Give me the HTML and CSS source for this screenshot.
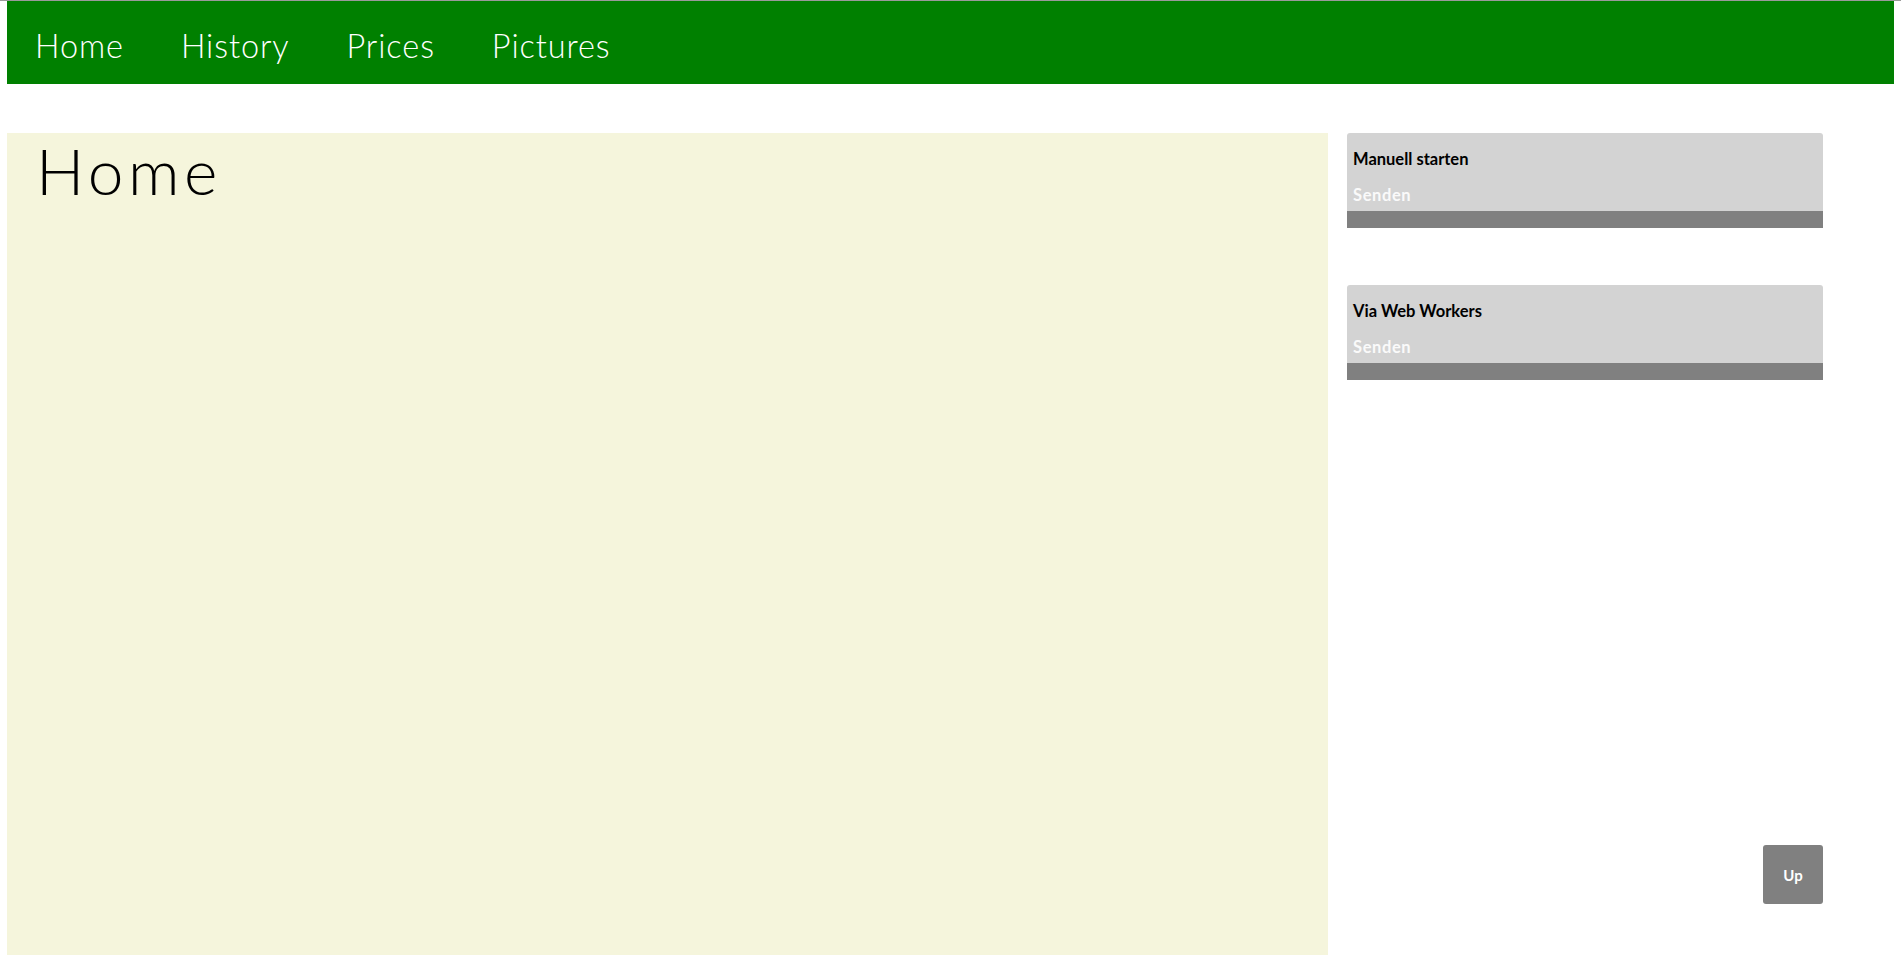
FILE: index.html
```html
<!DOCTYPE html>
<html lang="de">
<head>
<meta charset="utf-8">
<title>Home</title>
<link rel="stylesheet" href="styles.css">
</head>
<body>
<div class="page">
  <nav class="topnav">
    <a class="navlink" href="#">Home</a>
    <a class="navlink" href="#">History</a>
    <a class="navlink" href="#">Prices</a>
    <a class="navlink" href="#">Pictures</a>
  </nav>
  <div class="layout">
    <main class="content">
      <h1 class="title">Home</h1>
    </main>
    <aside class="sidebar">
      <section class="card">
        <div class="card-body">
          <div class="card-title">Manuell starten</div>
          <div class="card-action">Senden</div>
        </div>
        <div class="card-foot"></div>
      </section>
      <section class="card">
        <div class="card-body">
          <div class="card-title">Via Web Workers</div>
          <div class="card-action">Senden</div>
        </div>
        <div class="card-foot"></div>
      </section>
    </aside>
  </div>
</div>
<a class="up-btn" href="#">Up</a>
</body>
</html>
```
FILE: styles.css
```css
html, body {
  margin: 0;
  padding: 0;
  height: 100%;
}
body {
  border-top: 1px solid #9a9a9a;
  box-sizing: border-box;
  background: #fff;
  font-family: "Lato", "Liberation Sans", sans-serif;
  overflow: hidden;
}
.page {
  padding: 0 7px;
  height: 100%;
  display: flex;
  flex-direction: column;
}
.topnav {
  background: #008000;
  height: 83px;
  display: flex;
  align-items: center;
  padding-left: 28px;
  gap: 57px;
  flex-shrink: 0;
}
.navlink {
  color: #fff;
  text-decoration: none;
  font-family: "Lato", sans-serif;
  font-weight: 300;
  font-size: 32.5px;
  letter-spacing: 0.9px;
  padding-top: 6px;
}
.layout {
  display: flex;
  gap: 19px;
  margin-top: 49px;
  flex: 1;
}
.content {
  width: 1321px;
  background: #f5f5dc;
  flex-shrink: 0;
}
.title {
  margin: 0;
  padding: 0 0 0 29px;
  font-family: "Lato", sans-serif;
  font-weight: 300;
  font-size: 64px;
  letter-spacing: 4.5px;
  line-height: 1.2;
  color: #000;
}
.sidebar {
  width: 476px;
  display: flex;
  flex-direction: column;
  gap: 57px;
}
.card {
  border-radius: 3px 3px 0 0;
  overflow: hidden;
}
.card-body {
  background: #d3d3d3;
  padding: 16px 6px 6px;
}
.card-title {
  font-weight: 700;
  font-size: 16.5px;
  color: #000;
  line-height: 20px;
}
.card-action {
  font-weight: 700;
  font-size: 16.5px;
  letter-spacing: 0.6px;
  color: #fafafa;
  line-height: 20px;
  margin-top: 16px;
}
.card-foot {
  background: #808080;
  height: 17px;
}
.up-btn {
  position: fixed;
  right: 78px;
  bottom: 51px;
  width: 60px;
  height: 59px;
  background: #808080;
  border-radius: 3px;
  color: #fff;
  font-weight: 700;
  font-size: 15px;
  display: flex;
  align-items: center;
  justify-content: center;
  text-decoration: none;
}
```
